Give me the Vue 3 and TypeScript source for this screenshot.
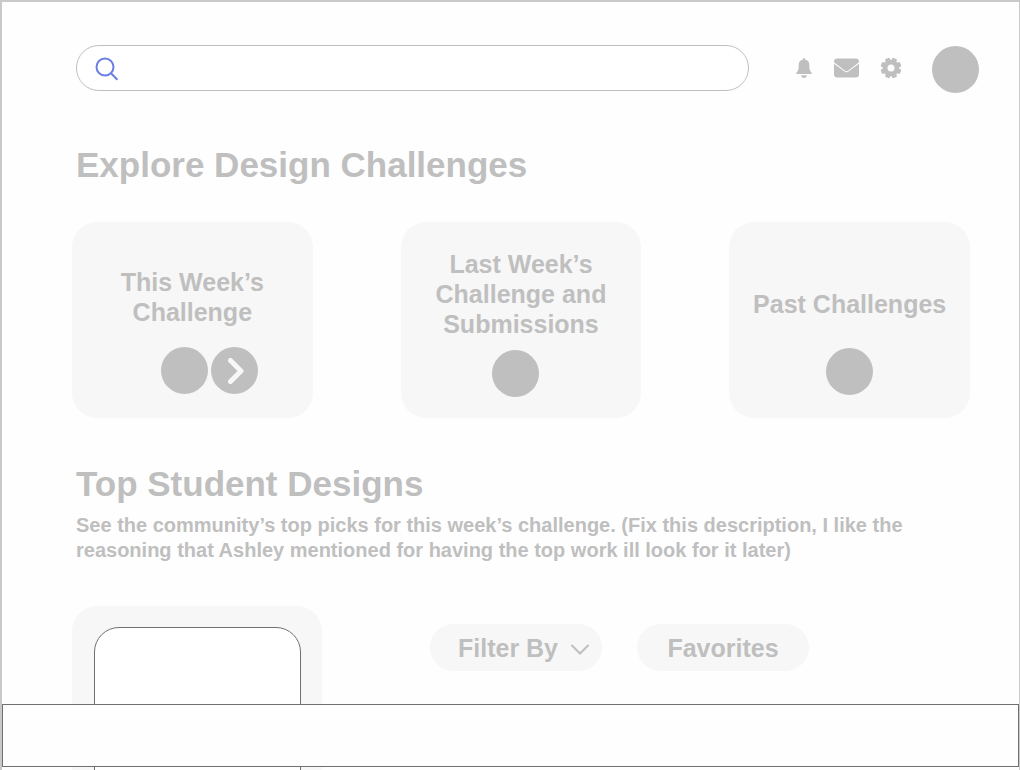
<script setup lang="ts">
import { ref } from 'vue'

interface Challenge {
  id: string
  lines: string[]
  actions: { label: string; arrow: boolean }[]
}

const query = ref('')
const filter = ref('Filter By')
const gearAngles = [22.5, 67.5, 112.5, 157.5]

const challenges: Challenge[] = [
  {
    id: 'current',
    lines: ['This Week’s', 'Challenge'],
    actions: [
      { label: 'Details of this week’s challenge', arrow: false },
      { label: 'Open this week’s challenge', arrow: true },
    ],
  },
  {
    id: 'previous',
    lines: ['Last Week’s', 'Challenge and', 'Submissions'],
    actions: [{ label: 'Open last week’s challenge', arrow: false }],
  },
  {
    id: 'past',
    lines: ['Past Challenges'],
    actions: [{ label: 'Open past challenges', arrow: false }],
  },
]
</script>

<template>
  <div class="page">
    <header class="topbar">
      <form class="search" role="search" @submit.prevent>
        <svg class="search-icon" viewBox="0 0 24 24" aria-hidden="true">
          <circle cx="10" cy="10" r="8.5" />
          <path d="M16 16.2 22.4 22.8" />
        </svg>
        <input v-model="query" type="search" aria-label="Search" />
      </form>
      <nav class="tools" aria-label="Account">
        <button type="button" class="tool bell" aria-label="Notifications">
          <svg viewBox="0 0 16 20">
            <path d="M8 0c.7 0 1 .6 1 1.400C11.800 1.900 13.300 3.900 13.300 6.600c0 4.600.5 6.300 2.200 7.900.6.600.3 1.500-.6 1.500H1.100c-.9 0-1.200-.9-.6-1.500C2.200 12.900 2.700 11.200 2.700 6.600 2.700 3.900 4.200 1.900 7 1.400 7 .6 7.300 0 8 0Z" />
            <path d="M5.200 17.300h5.600C10.700 19 9.600 20 8 20s-2.700-1-2.800-2.700Z" />
          </svg>
        </button>
        <button type="button" class="tool mail" aria-label="Messages">
          <svg viewBox="0 0 25 20">
            <path d="M3 .5h19c1.700 0 3 1 3 2.900v.9l-11.300 8.600c-.8.500-1.600.5-2.400 0L0 4.300v-.9C0 1.500 1.300.5 3 .5Z" />
            <path d="M0 5.700l10.900 8.100c1 .7 2.200.7 3.200 0L25 5.700v10.800c0 1.800-1.300 3-3 3H3c-1.700 0-3-1.200-3-3Z" />
          </svg>
        </button>
        <button type="button" class="tool gear" aria-label="Settings">
          <svg viewBox="0 0 20 20">
            <rect
              v-for="angle in gearAngles"
              :key="angle"
              x="7.500"
              y="-.4"
              width="5"
              height="20.800"
              rx="1.200"
              :transform="`rotate(${angle} 10 10)`"
            />
            <circle cx="10" cy="10" r="8.300" />
            <circle class="hub" cx="10" cy="10" r="3.500" />
          </svg>
        </button>
        <button type="button" class="dot avatar" aria-label="Profile"></button>
      </nav>
    </header>

    <main class="content">
      <h1 class="heading">Explore Design Challenges</h1>
      <section class="challenges" aria-label="Challenges">
        <article v-for="item in challenges" :key="item.id" class="card" :class="item.id">
          <h2 class="card-title">
            <span v-for="line in item.lines" :key="line">{{ line }}</span>
          </h2>
          <div class="actions">
            <button
              v-for="action in item.actions"
              :key="action.label"
              type="button"
              class="dot"
              :aria-label="action.label"
            >
              <svg v-if="action.arrow" class="arrow" viewBox="0 0 16 26">
                <path d="M2.500 2.500 13 13 2.500 23.500" />
              </svg>
            </button>
          </div>
        </article>
      </section>

      <h1 class="heading">Top Student Designs</h1>
      <p class="description">
        See the community’s top picks for this week’s challenge. (Fix this description, I like the
        reasoning that Ashley mentioned for having the top work ill look for it later)
      </p>

      <section class="designs" aria-label="Student designs">
        <article class="preview"><div class="screen"></div></article>
        <div class="filters">
          <div class="pill filter">
            <select v-model="filter" aria-label="Filter designs">
              <option>Filter By</option>
            </select>
            <svg class="chevron" viewBox="0 0 18 11" aria-hidden="true">
              <path d="M1 1.500 9 9.500 17 1.500" />
            </svg>
          </div>
          <button type="button" class="pill">Favorites</button>
        </div>
      </section>
    </main>

    <footer class="dock"></footer>
  </div>
</template>

<style>
body {
  margin: 0;
}
</style>

<style scoped>
.page,
.page * {
  box-sizing: border-box;
}

.page {
  position: relative;
  display: flex;
  flex-direction: column;
  height: 100vh;
  overflow: hidden;
  border: solid #c9c9c9;
  border-width: 2px 1px 0 2px;
  background: #fefefe;
  color: #bfbfbf;
  font-family: "Liberation Sans", Arial, sans-serif;
  font-weight: 700;
}

button,
input,
select {
  margin: 0;
  padding: 0;
  border: 0;
  background: none;
  color: inherit;
  font: inherit;
}

button {
  cursor: pointer;
}

svg {
  display: block;
}

.topbar {
  display: flex;
  flex: none;
  align-items: flex-start;
  gap: 47px;
  padding: 43px 40px 0 74px;
}

.search {
  display: flex;
  flex: 1;
  align-items: center;
  gap: 12px;
  height: 46px;
  padding: 2px 18px 0;
  border: 1px solid #bfbfbf;
  border-radius: 23px;
  background: #fff;
}

.search-icon {
  flex: none;
  width: 24px;
  height: 24px;
  fill: none;
  stroke: #6b7fe3;
  stroke-width: 2;
}

.search input {
  flex: 1;
  min-width: 0;
  height: 40px;
  outline: 0;
  font-size: 20px;
}

.tools {
  display: flex;
  align-items: flex-start;
  gap: 22px;
  padding-top: 1px;
}

.tool {
  margin-top: 12px;
}

.tool svg {
  width: 100%;
  height: 20px;
  overflow: visible;
  fill: #bfbfbf;
}

.bell {
  width: 16px;
}

.mail {
  width: 25px;
}

.gear {
  width: 20px;
}

.gear .hub {
  fill: #fefefe;
}

.dot {
  display: grid;
  place-items: center;
  width: 47px;
  height: 47px;
  border-radius: 50%;
  background: #bfbfbf;
}

.avatar {
  margin-left: 9px;
}

.content {
  flex: none;
  padding: 51px 49px 0 70px;
}

.heading {
  margin: 0 0 0 4px;
  font-size: 35px;
  line-height: 42px;
}

.challenges {
  display: grid;
  grid-template-columns: repeat(3, 1fr);
  gap: 88px;
  margin: 36px 0 45px;
}

.card {
  display: flex;
  flex-direction: column;
  align-items: center;
  justify-content: flex-end;
  gap: 20px;
  min-height: 196px;
  padding-bottom: 24px;
  border-radius: 25px;
  background: #f7f7f7;
}

.card-title {
  margin: 0;
  font-size: 25px;
  line-height: 30px;
  text-align: center;
  white-space: nowrap;
}

.card-title span {
  display: block;
}

.actions {
  display: flex;
  gap: 3px;
}

.current .actions {
  padding-left: 35px;
}

.previous {
  gap: 11px;
  padding-bottom: 21px;
}

.previous .actions {
  padding-right: 10px;
}

.past {
  gap: 29px;
  padding-bottom: 23px;
}

.arrow {
  width: 16px;
  height: 26px;
  margin-left: 3px;
  fill: none;
  stroke: #f7f7f7;
  stroke-width: 5;
  stroke-linecap: round;
  stroke-linejoin: round;
}

.description {
  max-width: 840px;
  margin: 8px 0 0 4px;
  font-size: 20px;
  line-height: 25px;
}

.designs {
  display: flex;
  align-items: flex-start;
  gap: 108px;
  margin-top: 43px;
}

.preview {
  width: 250px;
  padding: 21px 21px 21px 22px;
  border-radius: 25px;
  background: #f7f7f7;
}

.screen {
  height: 360px;
  border: 1px solid #707070;
  border-radius: 25px;
  background: #fff;
}

.filters {
  display: flex;
  gap: 35px;
  padding-top: 18px;
}

.pill {
  width: 172px;
  height: 47px;
  border-radius: 24px;
  background: #f7f7f7;
  font-size: 25px;
  line-height: 30px;
}

.filter {
  display: grid;
  align-items: center;
}

.filter select,
.chevron {
  grid-area: 1 / 1;
}

.filter select {
  width: 100%;
  height: 47px;
  padding: 0 36px 0 28px;
  appearance: none;
  outline: 0;
}

.chevron {
  justify-self: end;
  width: 18px;
  height: 11px;
  margin: 4px 13px 0 0;
  fill: none;
  stroke: #bfbfbf;
  stroke-width: 2;
  stroke-linecap: round;
  pointer-events: none;
}

.dock {
  position: absolute;
  right: 0;
  bottom: 3px;
  left: 0;
  height: 63px;
  border: 1px solid #707070;
  background: #fefefe;
}
</style>
